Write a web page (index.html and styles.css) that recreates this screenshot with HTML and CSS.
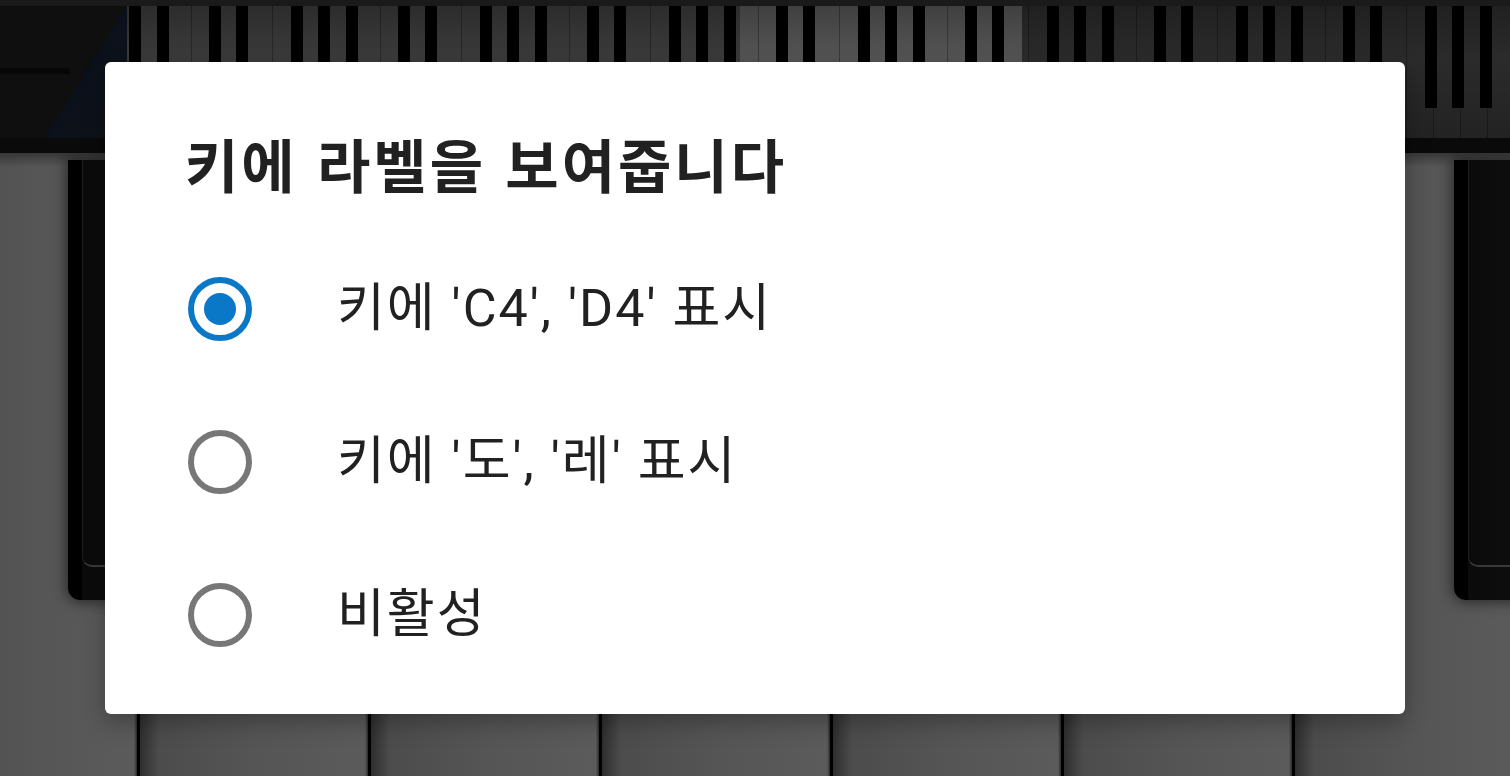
FILE: index.html
```html
<!DOCTYPE html>
<html lang="ko">

<head>
    <meta charset="UTF-8">
    <meta name="viewport" content="width=device-width, initial-scale=1.0">
    <title>키에 라벨을 보여줍니다</title>
    <link rel="stylesheet" href="styles.css">
</head>

<body>
    <div class="piano">
        <div class="topbar"></div>
        <div class="overview">
            <div class="corner"></div>
            <div class="mini-keys"></div>
        </div>
        <div class="rail"></div>
        <div class="keys">
            <div class="black-row">
                <div class="bk"><div class="bk-face"></div></div>
                <div class="bk-gap wide"></div>
                <div class="bk"><div class="bk-face"></div></div>
                <div class="bk-gap"></div>
                <div class="bk"><div class="bk-face"></div></div>
                <div class="bk-gap"></div>
                <div class="bk"><div class="bk-face"></div></div>
                <div class="bk-gap wide"></div>
                <div class="bk"><div class="bk-face"></div></div>
            </div>
        </div>
    </div>

    <div class="scrim">
        <div class="dialog" role="dialog">
            <h2 class="dialog-title">키에 라벨을 보여줍니다</h2>
            <ul class="options">
                <li class="option checked">
                    <span class="radio"></span>
                    <span class="label">키에 'C4', 'D4' 표시</span>
                </li>
                <li class="option">
                    <span class="radio"></span>
                    <span class="label">키에 '도', '레' 표시</span>
                </li>
                <li class="option">
                    <span class="radio"></span>
                    <span class="label">비활성</span>
                </li>
            </ul>
        </div>
    </div>
</body>

</html>
```

FILE: styles.css
```css
h2,
ul,
body {
    padding: 0px;
    margin: 0px;
}

body {
    width: 1510px;
    height: 776px;
    overflow: hidden;
    background: #0a0a0a;
    font-family: Roboto, "Noto Sans CJK KR", sans-serif;
}

/* piano behind the dialog (already dimmed) */

.piano {
    height: 776px;
    display: flex;
    flex-direction: column;
}

.topbar {
    height: 6px;
    background: #1a1a1a;
}

.overview {
    height: 132px;
    display: flex;
}

.corner {
    width: 127px;
    background:
        linear-gradient(180deg, transparent 62px, #070707 62px 68px, transparent 68px) 0 0 / 70px 100% no-repeat,
        linear-gradient(to bottom right, #0f0f0f 50%, #0b111c 50%, #111316) 45px 0 / 82px 100% no-repeat,
        linear-gradient(90deg, #0f0f0f 0 45px, #111316 45px);
}

.mini-keys {
    flex: 1;
    background:
        linear-gradient(90deg,
            transparent 0 18px, #000 18px 30px,
            transparent 30px 45px, #000 45px 57px,
            transparent 57px 100px, #000 100px 112px,
            transparent 112px 127px, #000 127px 139px,
            transparent 139px 155px, #000 155px 167px,
            transparent 167px) -125px 0 / 189px 102px repeat-x,
        linear-gradient(90deg, rgba(0, 0, 0, 0.3) 0 1px, transparent 1px) -125px 0 / 27px 100%,
        linear-gradient(180deg, rgba(0, 0, 0, 0.25), transparent 40%, rgba(0, 0, 0, 0.2)),
        linear-gradient(90deg, #3b3b3b 0 613px, #555 613px 895px, #2b2b2b 895px);
}

.rail {
    height: 15px;
    background: #0a0a0a;
}

.keys {
    flex: 1;
    overflow: hidden;
    background:
        linear-gradient(180deg, rgba(0, 0, 0, 0.35), transparent 14px),
        linear-gradient(90deg, #000 0 3px, #2e2e2e 3px, #4c4c4c 22px, #555 120px, #5b5b5b 228px, #2a2a2a 231px) 137px 0 / 231px 100%;
}

.black-row {
    display: flex;
    padding: 7px 0 0 68px;
}

.bk {
    flex: none;
    width: 140px;
    height: 440px;
    border-radius: 0 0 12px 12px;
    background: linear-gradient(90deg, #000 0 14px, #0b0b0b 14px, #111 100%);
    box-shadow: 0 0 14px 2px rgba(0, 0, 0, 0.55);
}

.bk-face {
    margin-left: 14px;
    height: 405px;
    border-left: 1px solid #1f1f1f;
    border-bottom: 2px solid #3a3a3a;
    border-bottom-left-radius: 10px;
}

.bk-gap {
    flex: none;
    width: 91px;
}

.bk-gap.wide {
    width: 322px;
}

/* dialog */

.scrim {
    position: fixed;
    inset: 0;
    display: flex;
    align-items: center;
    justify-content: center;
}

.dialog {
    width: 1300px;
    height: 652px;
    background: #fff;
    border-radius: 6px;
    box-shadow: 0 8px 24px rgba(0, 0, 0, 0.3);
}

.dialog-title {
    padding: 72px 0 0 80px;
    font: 700 58px/58px "Noto Sans CJK KR", sans-serif;
    letter-spacing: 3px;
    color: #212121;
}

.options {
    list-style: none;
    margin-top: 40px;
}

.option {
    height: 153px;
    display: flex;
    align-items: center;
    padding-left: 83px;
}

.radio {
    flex: none;
    width: 64px;
    height: 64px;
    box-sizing: border-box;
    border: 6.5px solid #777;
    border-radius: 50%;
    display: flex;
    align-items: center;
    justify-content: center;
}

.option.checked .radio {
    border-color: #0a78c7;
}

.option.checked .radio::before {
    content: "";
    width: 32px;
    height: 32px;
    border-radius: 50%;
    background: #0a78c7;
}

.label {
    margin-left: 85px;
    font-size: 52px;
    line-height: 52px;
    letter-spacing: 2px;
    color: #212121;
}
```
